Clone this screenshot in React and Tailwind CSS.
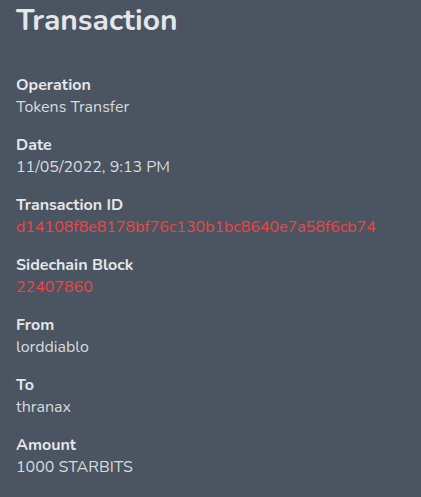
import React from 'react';

const rows = [
  { label: 'Operation', value: 'Tokens Transfer' },
  { label: 'Date', value: '11/05/2022, 9:13 PM' },
  { label: 'Transaction ID', value: 'd14108f8e8178bf76c130b1bc8640e7a58f6cb74', link: true },
  { label: 'Sidechain Block', value: '22407860', link: true },
  { label: 'From', value: 'lorddiablo' },
  { label: 'To', value: 'thranax' },
  { label: 'Amount', value: '1000 STARBITS' },
];

export default function App() {
  return (
    <div className="min-h-[497px] bg-[#4a5561] px-4 font-['Nunito','Lato',sans-serif]">
      <h1 className="pt-px text-[30px] leading-[40px] font-bold text-[#e4e6e9]">Transaction</h1>
      <dl className="mt-[33px] flex flex-col gap-4">
        {rows.map(({ label, value, link }) => (
          <div key={label}>
            <dt className="text-base leading-[22px] font-bold text-[#e4e6e9]">{label}</dt>
            <dd className={`text-base leading-[22px] ${link ? 'text-[#ef4444]' : 'text-[#d7dadf]'}`}>{value}</dd>
          </div>
        ))}
      </dl>
    </div>
  );
}
